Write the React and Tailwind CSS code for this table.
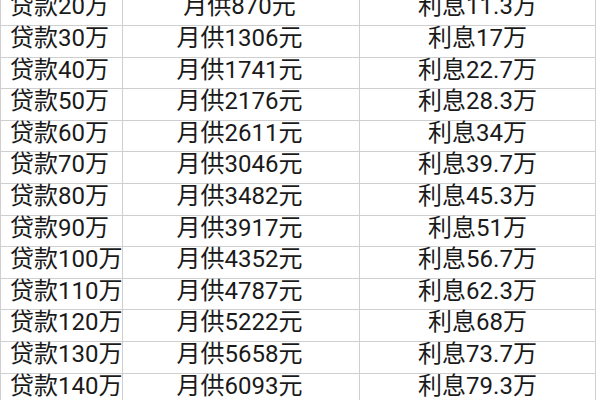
const rows = [
  ['20', '870', '11.3'],
  ['30', '1306', '17'],
  ['40', '1741', '22.7'],
  ['50', '2176', '28.3'],
  ['60', '2611', '34'],
  ['70', '3046', '39.7'],
  ['80', '3482', '45.3'],
  ['90', '3917', '51'],
  ['100', '4352', '56.7'],
  ['110', '4787', '62.3'],
  ['120', '5222', '68'],
  ['130', '5658', '73.7'],
  ['140', '6093', '79.3'],
];

export default function App() {
  return (
    <div className="w-[600px] h-[400px] overflow-hidden bg-white">
      <div
        className="-mt-[5.6px] w-[596px] border-l border-r border-[#cfcfcf] text-[#1a1a1a] text-[24px]"
        style={{ fontFamily: 'Roboto, "Noto Sans CJK SC", sans-serif' }}
      >
        {rows.map(([loan, pay, rate]) => (
          <div
            key={loan}
            className="grid grid-cols-[122px_237px_235px] h-[31.6px] border-b border-[#cfcfcf] leading-[25px]"
          >
            <div className="pl-[9px] border-r border-[#cfcfcf] whitespace-nowrap">贷款{loan}万</div>
            <div className="text-center pr-[3px] border-r border-[#cfcfcf] whitespace-nowrap">月供{pay}元</div>
            <div className="text-center whitespace-nowrap">利息{rate}万</div>
          </div>
        ))}
      </div>
    </div>
  );
}
